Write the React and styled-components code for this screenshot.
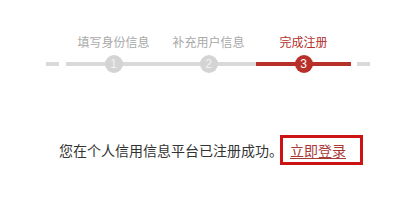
import React from 'react'
import styled, { createGlobalStyle } from 'styled-components'

const GlobalStyle = createGlobalStyle`
  html, body {
    margin: 0;
    padding: 0;
    background: #fff;
    font-family: "Noto Sans CJK SC", "Liberation Sans", sans-serif;
  }
`;

const Page = styled.div`
  width: 414px;
  height: 202px;
  overflow: hidden;
`;

const Steps = styled.div`
  display: flex;
  align-items: flex-end;
  padding: 34px 0 0 46px;
`;

const DashCell = styled.div`
  width: 13px;
  height: 20px;
  margin: ${props => props.$left ? '0 7px 0 0' : '0 0 0 6px'};
  background: linear-gradient(#d9d9d9, #d9d9d9) center / 100% 4px no-repeat;
`;

const Step = styled.div`
  width: 95px;
  display: flex;
  flex-direction: column;
  align-items: center;
`;

const Label = styled.div`
  font-size: 12px;
  line-height: 16px;
  height: 16px;
  margin-bottom: 4px;
  color: ${props => props.$active ? '#b3302a' : '#a8a8a8'};
  white-space: nowrap;
`;

const Track = styled.div`
  width: 100%;
  height: 20px;
  display: flex;
  align-items: center;
  justify-content: center;
  background: linear-gradient(${props => props.$active ? '#b8302a, #b8302a' : '#d9d9d9, #d9d9d9'}) center / 100% 4px no-repeat;
`;

const Dot = styled.div`
  width: 18px;
  height: 18px;
  border-radius: 50%;
  display: flex;
  align-items: center;
  justify-content: center;
  font-family: "Liberation Sans", Arial, sans-serif;
  font-size: 12px;
  line-height: 1;
  background: ${props => props.$active ? '#b8302a' : '#d4d4d4'};
  color: ${props => props.$active ? '#fff' : '#f2f2f2'};
`;

const Message = styled.div`
  display: flex;
  align-items: center;
  margin-top: 61px;
  padding-left: 59px;
  height: 30px;
`;

const Text = styled.span`
  font-size: 14px;
  color: #333;
  white-space: nowrap;
  width: 221px;
`;

const LoginBox = styled.a`
  box-sizing: border-box;
  height: 30px;
  width: 83px;
  border: 3px solid #cc1414;
  display: flex;
  align-items: center;
  padding-left: 7px;
  font-size: 14px;
  color: #a83a36;
  text-decoration: underline;
  text-underline-offset: 2px;
  white-space: nowrap;
  cursor: pointer;
`;

const steps = [
  { label: '填写身份信息', num: 1 },
  { label: '补充用户信息', num: 2 },
  { label: '完成注册', num: 3, active: true },
]

const App = () => {
  return (
    <Page>
      <GlobalStyle />
      <Steps>
        <DashCell $left />
        {steps.map(s => (
          <Step key={s.num}>
            <Label $active={s.active}>{s.label}</Label>
            <Track $active={s.active}>
              <Dot $active={s.active}>{s.num}</Dot>
            </Track>
          </Step>
        ))}
        <DashCell />
      </Steps>
      <Message>
        <Text>您在个人信用信息平台已注册成功。</Text>
        <LoginBox>立即登录</LoginBox>
      </Message>
    </Page>
  )
}

export default App
